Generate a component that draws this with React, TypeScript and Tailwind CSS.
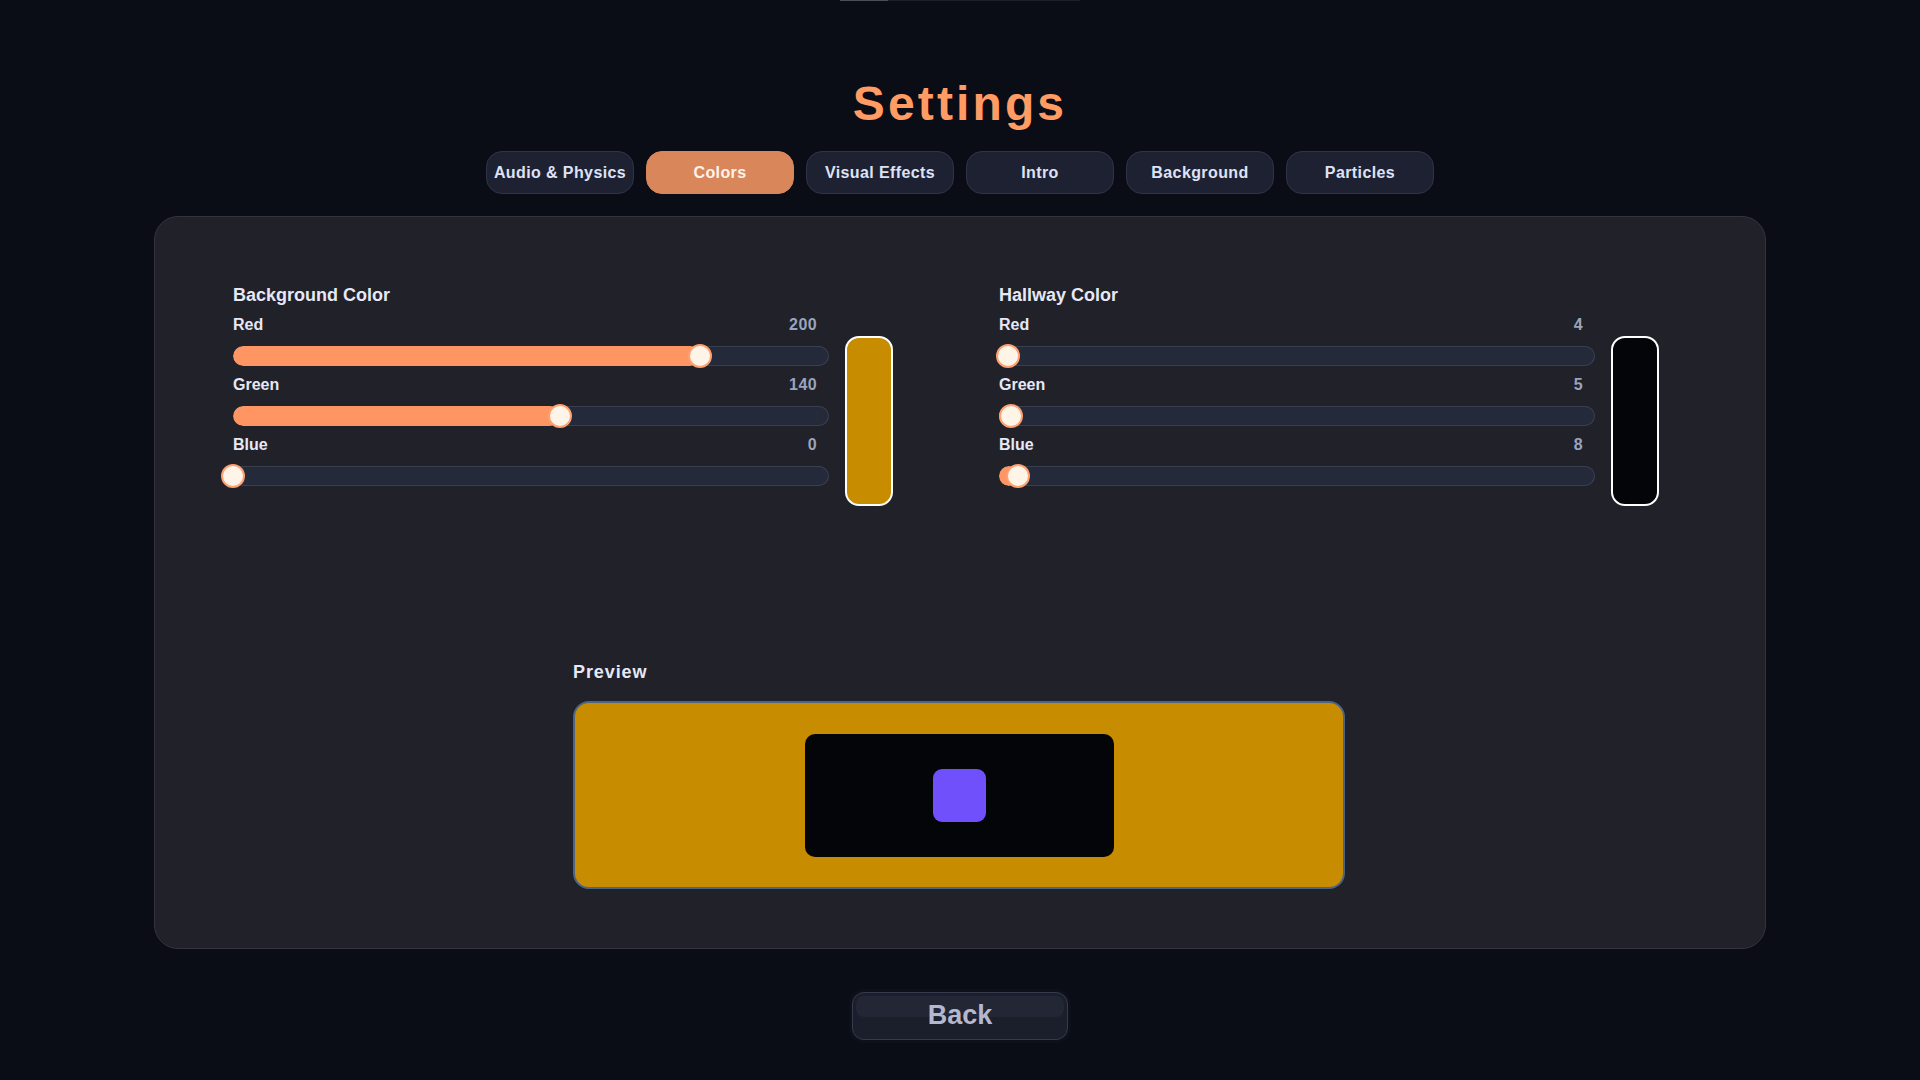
import { useState } from 'react'

interface ChannelProps {
  label: string
  value: number
}

const tabs = ['Audio & Physics', 'Colors', 'Visual Effects', 'Intro', 'Background', 'Particles']

const Channel = ({ label, value }: ChannelProps) => {
  const pct = (value / 255) * 100

  return (
    <div>
      <div className="mb-[9px] flex h-5 items-center justify-between pr-3 text-base leading-5">
        <span className="font-semibold text-[#e6e8f5]">{label}</span>
        <span className="font-semibold tracking-wide text-[#9ba4ba]">{value}</span>
      </div>
      <div className="relative flex h-6 items-center">
        <div className="relative h-5 w-full overflow-hidden rounded-full bg-[#252a3a] ring-1 ring-inset ring-[#3a3f50]">
          <div className="absolute inset-y-0 left-0 rounded-full bg-[#ff9562]" style={{ width: `${pct}%` }} />
        </div>
        <div
          className="absolute top-0 h-6 w-6 rounded-full border-2 border-[#ffa070] bg-[#fff4e8]"
          style={{ left: `calc(${pct}% - 12px)` }}
        />
      </div>
    </div>
  )
}

interface ColorGroupProps {
  title: string
  rgb: [number, number, number]
}

const ColorGroup = ({ title, rgb }: ColorGroupProps) => {
  const [r, g, b] = rgb

  return (
    <div>
      <h3 className="mb-1.5 text-lg leading-7 font-semibold text-[#e6e8f5]">{title}</h3>
      <div className="flex gap-4">
        <div className="flex w-[596px] flex-col gap-[7px]">
          <Channel label="Red" value={r} />
          <Channel label="Green" value={g} />
          <Channel label="Blue" value={b} />
        </div>
        <div
          className="mt-[21px] h-[170px] w-12 rounded-[14px] border-2 border-white"
          style={{ backgroundColor: `rgb(${r}, ${g}, ${b})` }}
        />
      </div>
    </div>
  )
}

const App = () => {
  const [active, setActive] = useState('Colors')

  return (
    <div className="min-h-screen bg-[#0a0d16] font-['Liberation_Sans',Arial,sans-serif]">
      <div className="mx-auto flex h-px w-[240px] bg-[#1d2028]">
        <div className="w-12 bg-[#4b4e55]" />
      </div>

      <h1 className="mt-[79px] text-center text-5xl leading-[48px] font-bold tracking-[0.065em] text-[#ff9b63]">
        Settings
      </h1>

      <div className="mt-[23px] flex justify-center gap-3">
        {tabs.map((tab) => (
          <button
            key={tab}
            onClick={() => setActive(tab)}
            className={
              tab === active
                ? 'h-[43px] w-[148px] rounded-2xl border border-[#d9875a] bg-[#d9875a] text-base font-semibold tracking-wide text-[#fff3ea]'
                : 'h-[43px] w-[148px] rounded-2xl border border-[#30344a] bg-[#1e2131] text-base font-semibold tracking-wide text-[#dfe2f7]'
            }
          >
            {tab}
          </button>
        ))}
      </div>

      <div className="mx-auto mt-[22px] w-[1612px] rounded-3xl border border-[#33343f] bg-[#212129] pt-16 pr-20 pb-[59px] pl-[78px]">
        <div className="grid grid-cols-2 gap-x-20">
          <ColorGroup title="Background Color" rgb={[200, 140, 0]} />
          <ColorGroup title="Hallway Color" rgb={[4, 5, 8]} />
        </div>

        <div className="mx-auto mt-[152px] w-[772px]">
          <h3 className="mb-[15px] text-lg leading-7 font-semibold tracking-wider text-[#e6e8f5]">Preview</h3>
          <div className="flex h-[188px] items-center justify-center rounded-2xl border-2 border-[#4d6585] bg-[#c88c00]">
            <div className="flex h-[123px] w-[309px] items-center justify-center rounded-[10px] bg-[#040509]">
              <div className="h-[53px] w-[53px] rounded-[9px] bg-[#7050fa]" />
            </div>
          </div>
        </div>
      </div>

      <div className="mt-[43px] flex justify-center pb-10">
        <button className="relative h-12 w-[216px] rounded-xl border border-[#363a4e] bg-[#1b1e2b] shadow-[0_0_0_3px_#0f111a]">
          <div className="absolute top-[3px] right-[3px] left-[3px] h-[21px] rounded-lg bg-[#232634]" />
          <span className="relative text-[27px] leading-none font-bold text-[#b3b8cf]">Back</span>
        </button>
      </div>
    </div>
  )
}

export default App
